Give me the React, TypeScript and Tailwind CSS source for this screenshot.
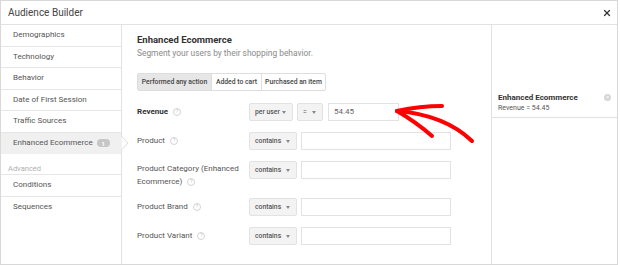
import { X } from 'lucide-react'

const sideItems = ['Demographics', 'Technology', 'Behavior', 'Date of First Session', 'Traffic Sources']

function Help() {
  return (
    <span className="ml-[5px] inline-flex h-[8px] w-[8px] shrink-0 items-center justify-center rounded-full border border-[#d4d4d4] align-[-1px] text-[5.5px] font-normal leading-none text-[#c4c4c4]">
      ?
    </span>
  )
}

function Select({ label, w }: { label: string; w: string }) {
  return (
    <div
      className={`flex h-[18px] ${w} shrink-0 items-center justify-between whitespace-nowrap rounded-[2px] border border-[#e2e2e2] bg-[#f3f3f3] pl-[5px] pr-[6px] text-[6.8px] font-medium text-[#555]`}
    >
      <span>{label}</span>
      <span className="h-0 w-0 border-x-[2.5px] border-t-[3px] border-x-transparent border-t-[#888]" />
    </div>
  )
}

function Input({ value, w }: { value?: string; w: string }) {
  return (
    <div className={`flex h-[18px] ${w} shrink-0 items-center border border-[#e2e2e2] bg-white px-[5px] text-[8px] text-[#666]`}>
      {value}
    </div>
  )
}

export default function App() {
  return (
    <div className="h-[265px] w-[620px] bg-white" style={{ fontFamily: 'Roboto, "Liberation Sans", sans-serif' }}>
      <div className="flex h-[265px] w-[618px] flex-col border border-[#d8d8d8]">
        <header className="flex h-[24px] shrink-0 items-center justify-between border-b border-[#e2e2e2] pl-[7px] pr-[5px]">
          <span className="text-[10px] text-[#444]">Audience Builder</span>
          <X size={10} strokeWidth={3} className="text-[#333]" />
        </header>

        <div className="flex min-h-0 flex-1">
          {/* left nav */}
          <nav className="relative w-[121px] shrink-0 border-r border-[#e2e2e2] text-[8px] text-[#555]">
            {sideItems.map((s) => (
              <div key={s} className="flex h-[21.5px] items-center border-b border-[#e6e6e6] pl-[12px]">
                {s}
              </div>
            ))}
            <div className="flex h-[21px] items-center bg-[#f0f0f0] pl-[12px]">
              Enhanced Ecommerce
              <span className="ml-[4px] flex h-[8px] w-[13px] items-center justify-center rounded-full bg-[#c6c6c6] text-[6px] font-bold text-white">
                1
              </span>
            </div>
            <svg className="absolute left-[120px] top-[111px] z-10" width="8" height="14" viewBox="0 0 8 14">
              <path d="M0.5 0 L7 7 L0.5 14" fill="white" stroke="#dcdcdc" strokeWidth="1" />
            </svg>
            <div className="mt-[11px] h-[10px] border-b border-[#e6e6e6] pl-[7px] text-[7.5px] leading-[8px] text-[#b0b0b0]">Advanced</div>
            <div className="flex h-[22px] items-center border-b border-[#e6e6e6] pl-[12px]">Conditions</div>
            <div className="flex h-[21px] items-center pl-[12px]">Sequences</div>
          </nav>

          {/* main */}
          <main className="relative w-[370px] shrink-0 border-r border-[#e2e2e2] pl-[15px] pt-[8px]">
            <h2 className="text-[9.5px] font-bold leading-[13px] text-[#333]">Enhanced Ecommerce</h2>
            <p className="mt-[1px] text-[8.4px] leading-[12px] text-[#8a8a8a]">Segment your users by their shopping behavior.</p>

            <div className="mt-[14px] flex h-[18px] w-fit rounded-[2px] border border-[#dedede] text-[6.8px] font-medium text-[#444]">
              <div className="flex w-[73px] items-center justify-center bg-[#e6e6e6]">Performed any action</div>
              <div className="flex w-[50px] items-center justify-center border-l border-[#dedede]">Added to cart</div>
              <div className="flex w-[64px] items-center justify-center border-l border-[#dedede]">Purchased an item</div>
            </div>

            <div className="mt-[12px] flex flex-col gap-[11px] text-[8px] text-[#555]">
              <div className="flex items-center">
                <div className="flex w-[112px] items-center font-bold text-[#333]">
                  Revenue
                  <Help />
                </div>
                <div className="flex gap-[4px]">
                  <Select label="per user" w="w-[44px]" />
                  <Select label="=" w="w-[26px]" />
                </div>
                <div className="ml-[5px]">
                  <Input value="54.45" w="w-[71px]" />
                </div>
              </div>
              <div className="flex items-center">
                <div className="flex w-[112px] items-center">
                  Product
                  <Help />
                </div>
                <Select label="contains" w="w-[48px]" />
                <div className="ml-[4px]">
                  <Input w="w-[150px]" />
                </div>
              </div>
              <div className="flex items-start">
                <div className="w-[112px] pt-[1px] leading-[13px]">
                  <div>Product Category (Enhanced</div>
                  <div className="flex items-center">
                    Ecommerce)
                    <Help />
                  </div>
                </div>
                <Select label="contains" w="w-[48px]" />
                <div className="ml-[4px]">
                  <Input w="w-[150px]" />
                </div>
              </div>
              <div className="-mt-[1px] flex items-center">
                <div className="flex w-[112px] items-center">
                  Product Brand
                  <Help />
                </div>
                <Select label="contains" w="w-[48px]" />
                <div className="ml-[4px]">
                  <Input w="w-[150px]" />
                </div>
              </div>
              <div className="flex items-center">
                <div className="flex w-[112px] items-center">
                  Product Variant
                  <Help />
                </div>
                <Select label="contains" w="w-[48px]" />
                <div className="ml-[4px]">
                  <Input w="w-[150px]" />
                </div>
              </div>
            </div>

            <svg className="pointer-events-none absolute left-0 top-0" width="370" height="239" viewBox="122 25 370 239">
              <g fill="none" stroke="#ff0000" strokeWidth="4" strokeLinecap="round">
                <path d="M397 111 Q420 106 442 106" />
                <path d="M397 111 Q416 122 432 136" />
                <path d="M397 111 Q445 115 472 141" />
              </g>
            </svg>
          </main>

          {/* right */}
          <aside className="flex-1 pt-[67px]">
            <div className="flex items-start justify-between border-b border-[#e2e2e2] pb-[4px] pl-[6px] pr-[6px]">
              <div>
                <div className="text-[8px] font-bold leading-[11px] text-[#333]">Enhanced Ecommerce</div>
                <div className="text-[7px] leading-[10px] text-[#555]">Revenue = 54.45</div>
              </div>
              <span className="mt-[2px] flex h-[7px] w-[7px] items-center justify-center rounded-full bg-[#d6d6d6] text-[5px] leading-none text-white">
                ×
              </span>
            </div>
          </aside>
        </div>
      </div>
    </div>
  )
}
